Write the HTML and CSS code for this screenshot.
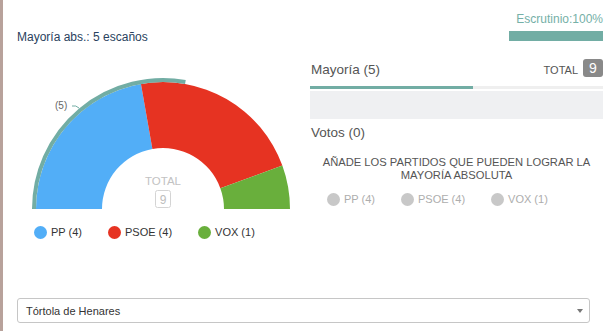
FILE: index.html
```html
<!DOCTYPE html>
<html lang="es">
<head>
<meta charset="utf-8">
<title>Mayoría</title>
<link rel="stylesheet" href="styles.css">
</head>
<body>
<div class="app">
  <div class="top">
    <div class="col-left">
      <div class="abs">Mayoría abs.: 5 escaños</div>
      <svg class="chart" width="283" height="140" viewBox="0 0 283 140">
        <path class="seg-pp" d="M19 139 A127 127 0 0 1 123.95 13.93 L135.41 78.93 A61 61 0 0 0 85 139 Z"/>
        <path class="seg-psoe" d="M123.95 13.93 A127 127 0 0 1 265.34 95.56 L203.32 118.14 A61 61 0 0 0 135.41 78.93 Z"/>
        <path class="seg-vox" d="M265.34 95.56 A127 127 0 0 1 273 139 L207 139 A61 61 0 0 0 203.32 118.14 Z"/>
        <path class="ring" d="M17 139 A129 129 0 0 1 168.40 11.96"/>
        <path class="leader" d="M55 36 Q59 35 62 38"/>
        <text class="maj-label" x="38" y="39">(5)</text>
        <text class="total-in" x="146" y="115" text-anchor="middle">TOTAL</text>
        <rect class="total-box" x="138.5" y="120.5" width="15" height="17" rx="2"/>
        <text class="total-num" x="146" y="133.5" text-anchor="middle">9</text>
      </svg>
      <ul class="legend">
        <li class="legend-item"><span class="dot dot--pp"></span>PP (4)</li>
        <li class="legend-item"><span class="dot dot--psoe"></span>PSOE (4)</li>
        <li class="legend-item"><span class="dot dot--vox"></span>VOX (1)</li>
      </ul>
    </div>
    <div class="col-right">
      <div class="escrutinio">
        <div class="esc-label">Escrutinio:100%</div>
        <div class="esc-bar"></div>
      </div>
      <div class="mayoria-row">
        <span class="mayoria-title">Mayoría (5)</span>
        <span class="total"><span class="total-label">TOTAL</span><span class="badge">9</span></span>
      </div>
      <div class="progress"><div class="progress-fill" style="width:55.56%"></div></div>
      <div class="drop-zone"></div>
      <div class="votos">Votos (0)</div>
      <p class="hint">AÑADE LOS PARTIDOS QUE PUEDEN LOGRAR LA MAYORÍA ABSOLUTA</p>
      <ul class="legend legend--muted">
        <li class="legend-item"><span class="dot"></span>PP (4)</li>
        <li class="legend-item"><span class="dot"></span>PSOE (4)</li>
        <li class="legend-item"><span class="dot"></span>VOX (1)</li>
      </ul>
    </div>
  </div>
  <div class="select">
    <span class="select-text">Tórtola de Henares</span>
    <span class="select-arrow"></span>
  </div>
</div>
</body>
</html>
```

FILE: styles.css
```css
* { box-sizing: border-box; }

html, body {
  margin: 0;
  padding: 0;
  background: #fff;
  overflow: hidden;
}

body {
  font-family: "Liberation Sans", Arial, sans-serif;
  color: #333;
}

.app {
  min-height: 331px;
  border-left: 3px solid #b8a29b;
  padding: 0 7px 0 14px;
}

.top {
  display: grid;
  grid-template-columns: 283px 293px;
  column-gap: 10px;
}

/* left column */
.col-left {
  padding-top: 30px;
}

.abs {
  font-size: 12px;
  line-height: 14px;
  color: #2a425e;
}

.chart {
  display: block;
  margin-top: 26px;
  font-family: "Liberation Sans", Arial, sans-serif;
}

.seg-pp { fill: #52aef7; }
.seg-psoe { fill: #e63322; }
.seg-vox { fill: #69af3c; }

.ring {
  fill: none;
  stroke: #72ada4;
  stroke-width: 4;
}

.leader {
  fill: none;
  stroke: #72ada4;
  stroke-width: 1;
}

.maj-label {
  font-size: 10px;
  fill: #666;
}

.total-in {
  font-size: 11.5px;
  fill: #c2c2c2;
}

.total-box {
  fill: none;
  stroke: #d4d4d4;
  stroke-width: 1;
}

.total-num {
  font-size: 12px;
  fill: #bdbdbd;
}

.legend {
  list-style: none;
  margin: 15px 0 0 0;
  padding: 0 0 0 17px;
  display: flex;
  column-gap: 26px;
}

.legend-item {
  display: flex;
  align-items: center;
  gap: 4px;
  font-size: 11px;
  line-height: 14px;
  color: #333;
}

.dot {
  width: 13px;
  height: 13px;
  border-radius: 50%;
  background: #c8c8c8;
  flex: none;
}

.dot--pp { background: #52aef7; }
.dot--psoe { background: #e63322; }
.dot--vox { background: #69af3c; }

.legend--muted {
  margin-top: 11px;
}

.legend--muted .legend-item {
  color: #adadad;
}

/* right column */
.col-right {
  padding-top: 12px;
}

.escrutinio {
  display: flex;
  flex-direction: column;
  align-items: flex-end;
}

.esc-label {
  font-size: 12px;
  line-height: 14px;
  color: #75b0a7;
}

.esc-bar {
  margin-top: 5px;
  width: 94px;
  height: 10px;
  background: #72ada4;
}

.mayoria-row {
  margin-top: 18px;
  height: 18px;
  display: flex;
  justify-content: space-between;
  align-items: flex-end;
  padding-left: 1px;
}

.mayoria-title {
  font-size: 13.5px;
  line-height: 14px;
  color: #555;
}

.total {
  display: flex;
  align-items: flex-end;
  gap: 5px;
}

.total-label {
  font-size: 11px;
  line-height: 14px;
  color: #555;
}

.badge {
  width: 20px;
  height: 18px;
  border-radius: 3px;
  background: #898989;
  color: #fff;
  font-size: 14px;
  line-height: 18px;
  text-align: center;
}

.progress {
  margin-top: 9px;
  height: 3px;
  background: #efefef;
}

.progress-fill {
  height: 100%;
  background: #72ada4;
}

.drop-zone {
  margin-top: 2px;
  height: 28px;
  background: #eff0f2;
}

.votos {
  margin-top: 6px;
  padding-left: 1px;
  font-size: 13.5px;
  line-height: 16px;
  color: #555;
}

.hint {
  margin: 15px 0 0 0;
  font-size: 11.2px;
  line-height: 12.5px;
  color: #555;
  text-align: center;
}

/* select */
.select {
  margin-top: 59px;
  width: 573px;
  height: 25px;
  border: 1px solid #c6c6c6;
  border-radius: 3px;
  display: flex;
  align-items: center;
  justify-content: space-between;
  padding: 0 6px 0 8px;
}

.select-text {
  font-size: 11px;
  color: #333;
}

.select-arrow {
  width: 0;
  height: 0;
  border-left: 3px solid transparent;
  border-right: 3px solid transparent;
  border-top: 4px solid #777;
  margin-top: 1px;
}
```
